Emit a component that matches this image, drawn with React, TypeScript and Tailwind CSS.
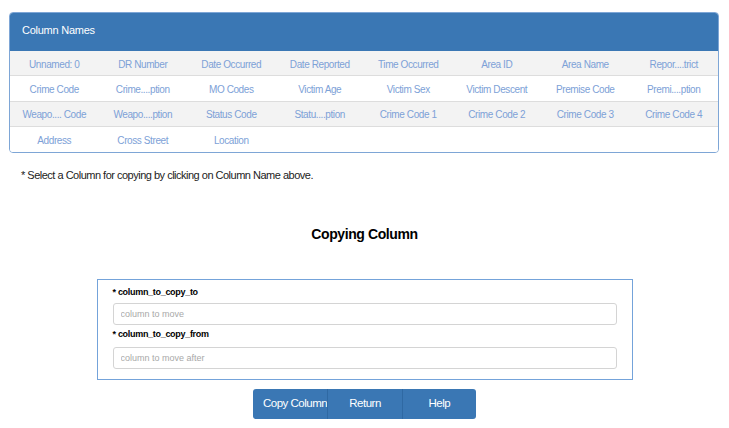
const rows: string[][] = [
  ["Unnamed: 0", "DR Number", "Date Occurred", "Date Reported", "Time Occurred", "Area ID", "Area Name", "Repor....trict"],
  ["Crime Code", "Crime....ption", "MO Codes", "Victim Age", "Victim Sex", "Victim Descent", "Premise Code", "Premi....ption"],
  ["Weapo.... Code", "Weapo....ption", "Status Code", "Statu....ption", "Crime Code 1", "Crime Code 2", "Crime Code 3", "Crime Code 4"],
  ["Address", "Cross Street", "Location"],
];

const ColumnPanel = () => {
  return (
    <div className="ml-[9px] mr-[10px] overflow-hidden rounded-[4px] border border-[#7ea6d6]">
      <div className="flex h-[38px] items-center bg-[#3a77b4] pb-[3px] pl-[12px] text-[11px] tracking-[-0.25px] text-white">
        Column Names
      </div>
      {rows.map((row, i) => (
        <div
          key={i}
          className={`grid h-[25.25px] grid-cols-8 pt-[2px] ${i % 2 === 0 ? "bg-[#f3f3f3]" : "bg-white"} ${
            i < rows.length - 1 ? "border-b border-[#dddddd]" : ""
          }`}
        >
          {row.map((name) => (
            <div
              key={name}
              className="flex cursor-pointer items-center justify-center whitespace-nowrap text-[10px] tracking-[-0.4px] text-[#7da1d7]"
            >
              {name}
            </div>
          ))}
        </div>
      ))}
    </div>
  );
};

const CopyForm = () => {
  const inputCls =
    "mt-[5px] block h-[22px] w-full rounded-[3px] border border-[#d4d4d4] pl-[7px] text-[9px] outline-none placeholder:text-[#a8a8a8]";
  const labelCls = "h-[11px] text-[9px] font-bold leading-[11px] tracking-[-0.3px] text-black";

  return (
    <div className="mx-auto mt-[36px] w-[536px] border border-[#74a3da] px-[15px] pb-[10px]">
      <div className={`${labelCls} mt-[7px]`}>* column_to_copy_to</div>
      <input className={inputCls} type="text" placeholder="column to move" />
      <div className={`${labelCls} mt-[4px]`}>* column_to_copy_from</div>
      <input className={`${inputCls} !mt-[7px]`} type="text" placeholder="column to move after" />
    </div>
  );
};

export default function App() {
  const btn =
    "flex h-full w-[75px] items-center justify-center overflow-hidden whitespace-nowrap text-[11.5px] tracking-[-0.5px] text-white";

  return (
    <div className="h-[428px] w-[729px] overflow-hidden bg-white pt-[12px] font-['Liberation_Sans',Arial,sans-serif]">
      <ColumnPanel />
      <p className="mt-[16px] pl-[21px] text-[11px] leading-[13px] tracking-[-0.5px] text-[#222]">
        * Select a Column for copying by clicking on Column Name above.
      </p>
      <h2 className="mt-[44px] text-center text-[14px] font-bold leading-[17px] tracking-[-0.4px] text-black">
        Copying Column
      </h2>
      <CopyForm />
      <div className="mx-auto mt-[9px] flex h-[30px] w-[223px] overflow-hidden rounded-[3px] bg-[#3a77b4]">
        <button className={`${btn} justify-start pl-[10px]`}>Copy Column</button>
        <button className={`${btn} w-[73px] border-l border-[#2f69a3]`}>Return</button>
        <button className={`${btn} border-l border-[#2f69a3]`}>Help</button>
      </div>
    </div>
  );
}
